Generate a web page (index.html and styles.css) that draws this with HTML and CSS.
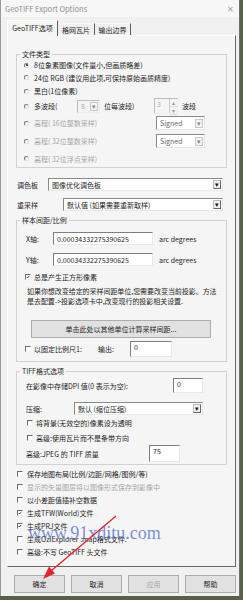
FILE: index.html
```html
<!DOCTYPE html>
<html>
<head>
<meta charset="utf-8">
<link rel="stylesheet" href="styles.css">
</head>
<body>
<div class="win">
  <div class="titlebar"><span class="title">GeoTIFF Export Options</span><span class="close">✕</span></div>
  <div class="tabs">
    <div class="tab active">GeoTIFF选项</div>
    <div class="tab">格网瓦片</div>
    <div class="tab">输出边界</div>
  </div>
  <div class="panel">
    <fieldset class="grp g1">
      <legend>文件类型</legend>
      <div class="row r1"><span class="radio on"></span><span>8位象素图像(文件量小,但画质略差)</span></div>
      <div class="row r2"><span class="radio"></span><span>24位 RGB (建议用此项,可保持原始画质精度)</span></div>
      <div class="row r3"><span class="radio"></span><span>黑白(1位像素)</span></div>
      <div class="row r4"><span class="radio"></span><span class="w43">多波段(</span><span class="sel dis s8"><span class="sv">8</span><span class="arr">▾</span></span><span class="w50 ml4">位每波段)</span><span class="spin"><span class="sv">3</span><span class="updn"><span>▴</span><span>▾</span></span></span><span class="ml4">波段</span></div>
      <div class="row r5 dim"><span class="radio"></span><span class="w122">高程( 16位整数采样)</span><span class="sel sg"><span class="sv">Signed</span><span class="arr">▾</span></span></div>
      <div class="row r6 dim"><span class="radio"></span><span class="w122">高程( 32位整数采样)</span><span class="sel sg"><span class="sv">Signed</span><span class="arr">▾</span></span></div>
      <div class="row r7 dim"><span class="radio"></span><span>高程( 32位浮点采样)</span></div>
    </fieldset>
    <div class="frow f1"><span class="w31">调色板</span><span class="sel big w175"><span class="sv">图像优化调色板</span><span class="arr dk">▾</span></span></div>
    <div class="frow f2"><span class="w46">重采样</span><span class="sel big w160"><span class="sv">默认值 (如果需要重新取样)</span><span class="arr dk">▾</span></span></div>
    <fieldset class="grp g2">
      <legend>样本间距/比例</legend>
      <div class="irow x1"><span class="w27">X轴:</span><span class="inp w100">0.00034332275390625</span><span class="ml6">arc degrees</span></div>
      <div class="irow x2"><span class="w27">Y轴:</span><span class="inp w100">0.00034332275390625</span><span class="ml6">arc degrees</span></div>
      <div class="crow c1"><span class="cb on"><svg viewBox="0 0 6 6"><polyline points="1,3 2.5,4.5 5,1.2"/></svg></span><span>总是产生正方形像素</span></div>
      <p class="info">如果你想改变给定的采样间距单位,您需要改变当前投影。方法<br>是去配置-&gt;投影选项卡中,改变现行的投影相关设置.</p>
      <div class="btn wide">单击此处以其他单位计算采样间距...</div>
      <div class="crow c2"><span class="cb"></span><span class="w64">以固定比例尺1:</span><span class="w32">输出:</span><span class="inp tl w42 h16">0</span></div>
    </fieldset>
    <fieldset class="grp g3">
      <legend>TIFF格式选项</legend>
      <div class="irow d1"><span class="w147">在影像中存储DPI 值(0 表示为空):</span><span class="inp tl w30 h15">0</span></div>
      <div class="irow d2"><span class="w48">压缩:</span><span class="sel big w129"><span class="sv">默认 (缩位压缩)</span><span class="arr dk">▾</span></span></div>
      <div class="crow d3"><span class="cb"></span><span>将背景(无效空的)像素设为透明</span></div>
      <div class="crow d4"><span class="cb"></span><span>高级:使用瓦片而不是条带方向</span></div>
      <div class="irow d5"><span class="w123">高级:JPEG 的 TIFF 质量</span><span class="inp tl w31 h17">75</span></div>
    </fieldset>
    <div class="brow"><span class="cb"></span><span>保存地图布局(比例/边距/网格/图例/等)</span></div>
    <div class="brow dim"><span class="cb"></span><span>显示的矢量图层将以图像形式保存到影像中</span></div>
    <div class="brow"><span class="cb"></span><span>以小差距值插补空数据</span></div>
    <div class="brow"><span class="cb on"><svg viewBox="0 0 6 6"><polyline points="1,3 2.5,4.5 5,1.2"/></svg></span><span>生成TFW(World)文件</span></div>
    <div class="brow"><span class="cb on"><svg viewBox="0 0 6 6"><polyline points="1,3 2.5,4.5 5,1.2"/></svg></span><span>生成PRJ文件</span></div>
    <div class="brow"><span class="cb"></span><span>生成OziExplorer .map格式文件.</span></div>
    <div class="brow"><span class="cb"></span><span>高级:不写 GeoTIFF 头文件</span></div>
  </div>
  <div class="buttons">
    <div class="btn bb">确定</div>
    <div class="btn bb">取消</div>
    <div class="btn bb dis">应用</div>
    <div class="btn bb">帮助</div>
  </div>
  <div class="watermark">www.91xditu.com</div>
  <svg class="arrow" width="243" height="600" viewBox="0 0 243 600">
    <line x1="116" y1="516" x2="51" y2="571" stroke="#e3262b" stroke-width="1.4"/>
    <polygon points="43,579 55,573.5 49,566.5" fill="#e3262b"/>
  </svg>
</div>
</body>
</html>
```
FILE: styles.css
```css
* { box-sizing: border-box; }
body {
  margin: 0;
  background: #56614c;
  font-family: "Noto Sans CJK SC", "Noto Sans", sans-serif;
  font-size: 7px;
  color: #1e1e1e;
}
.win {
  position: relative;
  width: 240px;
  height: 596px;
  background: #f0f0f0;
  border-left: 1px solid #9a9a9a;
  border-right: 1px solid #6f6f6f;
}
.titlebar {
  height: 17px;
  display: flex;
  align-items: center;
  justify-content: space-between;
  padding: 0 5px 0 4px;
  color: #8e8e8e;
  font-size: 7.5px;
  background: #f7f7f7;
}
.close { font-size: 8px; color: #a0a0a0; }
.tabs {
  display: flex;
  align-items: flex-end;
  height: 15px;
  margin: 3px 0 0 6px;
  position: relative;
  z-index: 1;
}
.tab {
  height: 12px;
  line-height: 12px;
  padding: 0 4px;
  border-right: 1px solid #5e5e5e;
  border-top: 1px solid #f9f9f9;
}
.tab.active {
  height: 16px;
  line-height: 14px;
  margin-bottom: -1px;
  padding: 0 4px;
  background: #f5f5f5;
  border: 1px solid;
  border-color: #fff #5e5e5e transparent #fff;
  border-bottom: none;
}
.tab:nth-child(2) { width: 37px; text-align: center; padding: 0; }
.tab:nth-child(3) { width: 36px; text-align: center; padding: 0; }
.tab.active { width: 51px; text-align: center; }
.panel {
  margin-left: 6px;
  width: 229px;
  height: 532px;
  border: 1px solid;
  border-color: #fff #666 #666 #fff;
  background: #f5f5f5;
  padding: 14px 0 0 8px;
}
.grp {
  margin: 0;
  padding: 0;
  border: 1px solid #d2d2d2;
  width: 211px;
  min-width: 0;
}
legend {
  margin-left: 3px;
  padding: 0 2px;
  line-height: 8px;
  height: 8px;
  font-size: 7px;
}
.g1 { padding-top: 1px; }
.row { display: flex; align-items: center; padding-left: 7px; white-space: nowrap; }
.r1 { height: 12px; }
.r2 { height: 13px; }
.r3 { height: 14px; }
.r4 { height: 16px; }
.r5 { height: 18px; }
.r6 { height: 18px; }
.r7 { height: 17px; }
.dim { color: #a6a6a6; }
.radio {
  width: 5px; height: 5px;
  border-radius: 50%;
  border: 1px solid;
  border-color: #777 #ddd #ddd #777;
  background: #fff;
  margin-right: 5px;
  flex: none;
  position: relative;
}
.radio.on::after {
  content: "";
  position: absolute;
  left: 0.5px; top: 0.5px;
  width: 2px; height: 2px;
  border-radius: 50%;
  background: #222;
}
.w27 { width: 27px; flex: none; }
.w30 { width: 30px; }
.w31 { width: 31px; flex: none; }
.w32 { width: 32px; flex: none; }
.w42 { width: 42px; }
.w43 { width: 43px; flex: none; }
.w46 { width: 46px; flex: none; }
.w48 { width: 48px; flex: none; }
.w50 { width: 50px; flex: none; }
.w64 { width: 64px; flex: none; }
.w100 { width: 100px; }
.w122 { width: 122px; flex: none; }
.w123 { width: 123px; flex: none; }
.w129 { width: 129px; }
.w147 { width: 147px; flex: none; }
.w160 { width: 160px; }
.w175 { width: 175px; }
.ml4 { margin-left: 4px; }
.ml6 { margin-left: 6px; }
.sel {
  display: flex;
  align-items: center;
  justify-content: space-between;
  background: #fff;
  border: 1px solid;
  border-color: #8a8a8a #e6e6e6 #e6e6e6 #8a8a8a;
  flex: none;
}
.sel .sv { padding-left: 3px; line-height: 10px; }
.sel .arr {
  width: 8px;
  height: 9px;
  margin-right: 1px;
  border: 1px solid #c8c8c8;
  background: #f3f3f3;
  font-size: 7px;
  line-height: 7px;
  text-align: center;
  color: #888;
}
.sel .arr.dk { color: #111; border-color: #bbb #666 #666 #bbb; background: #f0f0f0; }
.s8 { width: 23px; height: 13px; background: #f4f4f4; color: #aaa; border-color: #bdbdbd #eee #eee #bdbdbd; }
.sg { width: 49px; height: 14px; color: #6a6a6a; }
.big { height: 13px; }
.spin {
  display: flex;
  justify-content: space-between;
  width: 24px;
  height: 16px;
  margin-left: 0;
  border: 1px solid;
  border-color: #bdbdbd #eee #eee #bdbdbd;
  background: #f4f4f4;
  color: #aaa;
}
.spin .sv { padding: 1px 0 0 2px; line-height: 8px; }
.updn { display: flex; flex-direction: column; width: 8px; border-left: 1px solid #ccc; }
.updn span { flex: 1; font-size: 6px; line-height: 7px; text-align: center; border-bottom: 1px solid #ddd; color: #999; }
.frow { display: flex; align-items: center; padding-left: 1px; height: 13px; }
.f1 { margin-top: 10px; }
.f2 { margin-top: 7px; }
.g2 { margin-top: 5px; padding-bottom: 4px; }
.irow { display: flex; align-items: center; padding-left: 9px; white-space: nowrap; }
.inp {
  display: flex;
  align-items: center;
  height: 13px;
  padding-left: 3px;
  background: #fff;
  border: 1px solid;
  border-color: #7e7e7e #e8e8e8 #e8e8e8 #7e7e7e;
  flex: none;
}
.inp.tl { align-items: flex-start; line-height: 9px; padding-top: 1px; }
.h15 { height: 15px; }
.h16 { height: 16px; }
.h17 { height: 17px; }
.x1 { margin-top: 8px; height: 13px; }
.x2 { margin-top: 8px; height: 13px; }
.crow { display: flex; align-items: center; padding-left: 8px; height: 12px; white-space: nowrap; }
.c1 { margin-top: 5px; }
.cb {
  width: 6px; height: 6px;
  flex: none;
  margin-right: 3px;
  background: #fff;
  border: 1px solid;
  border-color: #6a6a6a #f4f4f4 #f4f4f4 #6a6a6a;
  display: flex;
}
.cb svg { width: 100%; height: 100%; }
.cb polyline { fill: none; stroke: #111; stroke-width: 1.1; }
.info {
  margin: 3px 0 0 0;
  padding-left: 10px;
  line-height: 10px;
  white-space: nowrap;
  letter-spacing: -0.05px;
}
.btn {
  display: flex;
  align-items: center;
  justify-content: center;
  background: #e1e1e1;
  border: 1px solid #adadad;
}
.wide {
  width: 180px;
  height: 18px;
  margin: 14px 0 0 14px;
}
.c2 { margin-top: 3px; height: 16px; }
.g3 { margin-top: 5px; padding-bottom: 2px; }
.d1 { margin-top: 3px; height: 15px; }
.d2 { margin-top: 9px; height: 13px; }
.d3 { margin-top: 2px; padding-left: 10px; }
.d4 { margin-top: 3px; padding-left: 10px; }
.d5 { margin-top: 1px; height: 17px; }
.brow { display: flex; align-items: center; height: 13px; padding-left: 1px; white-space: nowrap; }
.brow .cb { margin-right: 4px; }
.g3 + .brow { margin-top: 2px; }
.buttons {
  display: flex;
  gap: 6px;
  margin: 8px 0 0 13px;
}
.bb { width: 51px; height: 18px; }
.bb.dis { color: #a8a8a8; }
.watermark {
  position: absolute;
  left: 27px;
  top: 524px;
  font-family: "Liberation Serif", serif;
  font-size: 18px;
  line-height: 18px;
  color: rgba(70, 100, 205, 0.72);
}
.arrow { position: absolute; left: -1px; top: 0; pointer-events: none; }
```
